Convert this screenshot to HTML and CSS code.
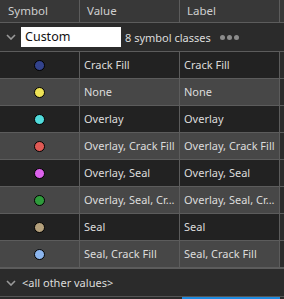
FILE: index.html
```html
<!DOCTYPE html>
<html lang="en">
<head>
    <meta charset="UTF-8">
    <title>Symbology</title>
    <link rel="stylesheet" href="styles.css">
</head>
<body>
    <div class="panel">
        <div class="head row3">
            <div class="hcell">Symbol</div>
            <div class="hcell">Value</div>
            <div class="hcell">Label</div>
        </div>
        <div class="group">
            <svg class="chev" width="10" height="6" viewBox="0 0 10 6"><path d="M1 1 L5 5 L9 1" fill="none" stroke="#9a9a9a" stroke-width="1.6"/></svg>
            <div class="name">Custom</div>
            <span class="count">8 symbol classes</span>
            <span class="dots"><i></i><i></i><i></i></span>
        </div>
        <div class="rows">
            <div class="row3 item dark">
                <div class="sym"><span class="dot" style="background:#33438c"></span></div>
                <div class="cell">Crack Fill</div>
                <div class="cell">Crack Fill</div>
            </div>
            <div class="row3 item light">
                <div class="sym"><span class="dot" style="background:#efe356"></span></div>
                <div class="cell">None</div>
                <div class="cell">None</div>
            </div>
            <div class="row3 item dark">
                <div class="sym"><span class="dot" style="background:#52dcdc"></span></div>
                <div class="cell">Overlay</div>
                <div class="cell">Overlay</div>
            </div>
            <div class="row3 item light">
                <div class="sym"><span class="dot" style="background:#e05a55"></span></div>
                <div class="cell">Overlay, Crack Fill</div>
                <div class="cell">Overlay, Crack Fill</div>
            </div>
            <div class="row3 item dark">
                <div class="sym"><span class="dot" style="background:#dc62ec"></span></div>
                <div class="cell">Overlay, Seal</div>
                <div class="cell">Overlay, Seal</div>
            </div>
            <div class="row3 item light">
                <div class="sym"><span class="dot" style="background:#2f9b3c"></span></div>
                <div class="cell">Overlay, Seal, Cr...</div>
                <div class="cell">Overlay, Seal, Cr...</div>
            </div>
            <div class="row3 item dark">
                <div class="sym"><span class="dot" style="background:#b4a07c"></span></div>
                <div class="cell">Seal</div>
                <div class="cell">Seal</div>
            </div>
            <div class="row3 item light">
                <div class="sym"><span class="dot" style="background:#8cb6ef"></span></div>
                <div class="cell">Seal, Crack Fill</div>
                <div class="cell">Seal, Crack Fill</div>
            </div>
        </div>
        <div class="other">
            <svg class="chev" width="10" height="6" viewBox="0 0 10 6"><path d="M1 1 L5 5 L9 1" fill="none" stroke="#9a9a9a" stroke-width="1.6"/></svg>
            <span>&lt;all other values&gt;</span>
        </div>
        <div class="scroll"><div class="thumb"></div></div>
    </div>
</body>
</html>
```

FILE: styles.css
```css
body {
    margin: 0;
    background-color: #2b2b2b;
    font-family: "Noto Sans", "Open Sans", sans-serif;
    font-size: 11px;
    color: #dcdcdc;
}
.panel {
    width: 284px;
    height: 299px;
    display: flex;
    flex-direction: column;
    overflow: hidden;
}
.row3 {
    display: grid;
    grid-template-columns: 80px 100px 100px 4px;
}
.head {
    height: 22px;
    background-color: #383838;
    border-bottom: 1px solid #5c5c5c;
    color: #cfcfcf;
    font-size: 11.5px;
}
.hcell {
    padding-left: 7px;
    line-height: 22px;
    border-right: 1px solid #5c5c5c;
}
.hcell:first-child {
    padding-left: 8px;
}
.group {
    height: 28px;
    display: flex;
    align-items: center;
    background-color: #2b2b2b;
    border-bottom: 1px solid #5c5c5c;
}
.chev {
    margin-left: 6px;
    margin-right: 5px;
}
.name {
    width: 96px;
    height: 20px;
    background-color: #fff;
    color: #111;
    font-size: 12.5px;
    line-height: 20px;
    padding-left: 4px;
    margin-right: 4px;
}
.count {
    color: #dcdcdc;
    font-size: 11px;
}
.dots {
    display: flex;
    gap: 2px;
    margin-left: 9px;
}
.dots i {
    width: 5px;
    height: 5px;
    border-radius: 50%;
    background-color: #8c8c8c;
}
.item {
    height: 26px;
    border-bottom: 1px solid #5c5c5c;
}
.item.dark {
    background-color: #222;
}
.item.light {
    background-color: #474747;
}
.sym,
.cell {
    border-right: 1px solid #5c5c5c;
}
.sym {
    display: flex;
    justify-content: center;
    align-items: center;
    padding-right: 1px;
}
.dot {
    width: 9px;
    height: 9px;
    border-radius: 50%;
    border: 1px solid #000;
}
.cell {
    padding-left: 4px;
    line-height: 26px;
    white-space: nowrap;
    overflow: hidden;
}
.rows .row3::after {
    content: "";
    background-color: #2b2b2b;
}
.other {
    flex: 1;
    display: flex;
    align-items: center;
    border-top: 1px solid #5c5c5c;
    background-color: #2b2b2b;
}
.other .chev {
    margin-right: 6px;
}
.scroll {
    height: 2px;
    border-top: 1px solid #555;
    background-color: #2b2b2b;
    display: flex;
}
.thumb {
    margin-left: 182px;
    width: 98px;
    background-color: #1e8ae0;
}
```
